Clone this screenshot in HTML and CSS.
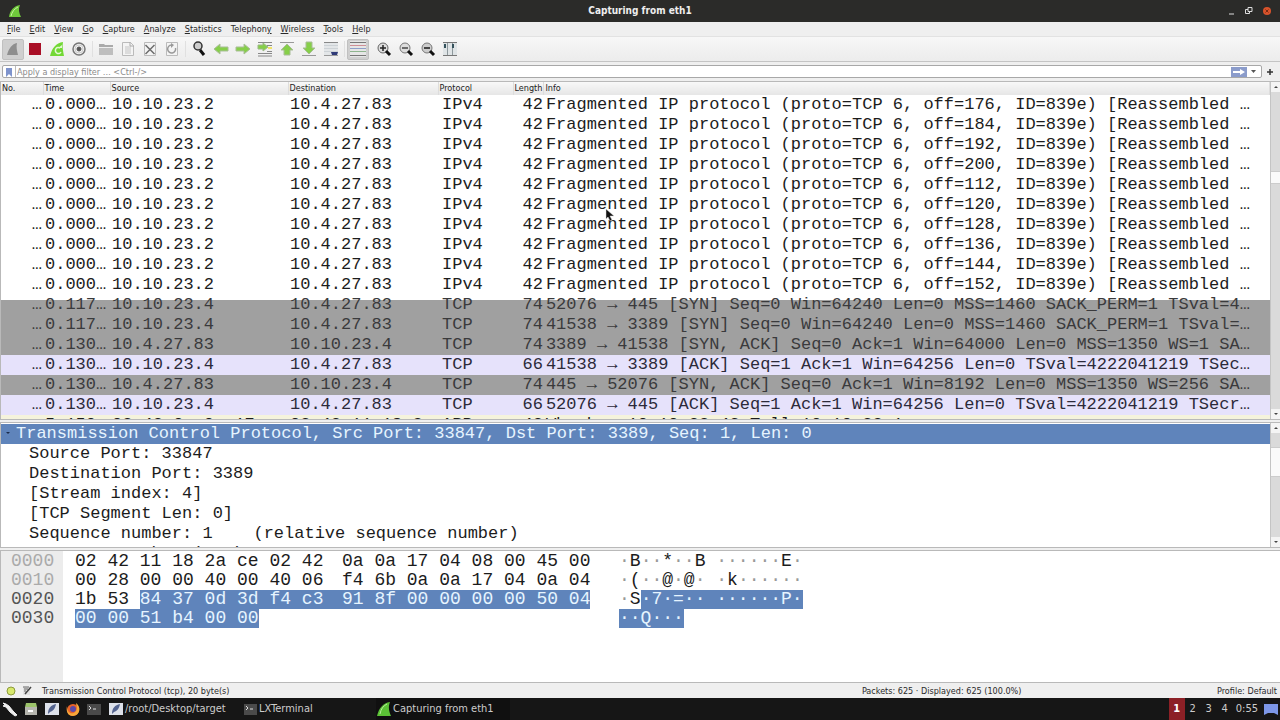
FILE: index.html
```html
<!DOCTYPE html>
<html lang="en">
<head>
    <meta charset="utf-8">
    <title>Capturing from eth1</title>
    <link rel="stylesheet" href="styles.css">
</head>
<body>
    <header class="titlebar">
        <svg class="app-icon" width="14" height="14" viewBox="0 0 14 14"><path d="M1 13C2 6 6 2 12 1c-2 4-1 8 1 12z" fill="#6fc93b"/><path d="M3 12c1-4 3-7 7-9" stroke="#c8f2a4" fill="none"/></svg>
        <h1>Capturing from eth1</h1>
        <div class="window-buttons">
            <button aria-label="Minimize"><svg width="8" height="8"><path d="M1 7h5" stroke="#ddd"/></svg></button>
            <button aria-label="Restore"><svg width="8" height="8" fill="none" stroke="#ddd"><path d="M3 .5h4v4H3zM3 2.500H.500v4h4V4.500"/></svg></button>
            <button aria-label="Close"><svg width="10" height="10"><circle cx="5" cy="5" r="4" fill="#d8532b"/><path d="M3.500 3.500l3 3m0-3l-3 3" stroke="#7a2a12"/></svg></button>
        </div>
    </header>

    <nav class="menubar">
        <a href="#"><u>F</u>ile</a>
        <a href="#"><u>E</u>dit</a>
        <a href="#"><u>V</u>iew</a>
        <a href="#"><u>G</u>o</a>
        <a href="#"><u>C</u>apture</a>
        <a href="#"><u>A</u>nalyze</a>
        <a href="#"><u>S</u>tatistics</a>
        <a href="#">Telephon<u>y</u></a>
        <a href="#"><u>W</u>ireless</a>
        <a href="#"><u>T</u>ools</a>
        <a href="#"><u>H</u>elp</a>
    </nav>

    <div class="toolbar">
        <button class="pressed" aria-label="Start capture"><svg viewBox="0 0 16 16"><path d="M2 14C4 7 7 3 12 2c-1 4 0 8 1 12z" fill="#8e8e8e"/></svg></button>
        <button aria-label="Stop capture"><svg viewBox="0 0 16 16"><path d="M2 2h12v12H2z" fill="#a90f26"/></svg></button>
        <button aria-label="Restart capture"><svg viewBox="0 0 16 16"><path d="M1 15C3 7 7 2 14 1c-1 4 0 9 1 14z" fill="#72d835"/><path d="M11 7a3 3 0 1 0 1 4" stroke="#e3f9d2" stroke-width="1.500" fill="none"/><path d="M9 7h4V4z" fill="#e3f9d2"/></svg></button>
        <button aria-label="Capture options"><svg viewBox="0 0 16 16" fill="none"><circle cx="8" cy="8" r="6" stroke="#777" stroke-width="1.500"/><circle cx="8" cy="8" r="2" fill="#555" stroke="#555"/><circle cx="8" cy="8" r="4" stroke="#ccc"/></svg></button>
        <span class="separator"></span>
        <button aria-label="Open"><svg viewBox="0 0 16 16"><path d="M1 3h5l1 1h8v10H1z" fill="#aaa"/><path d="M1 7h14v7H1z" fill="#bebebe"/><path d="M1 6.500h14" stroke="#eee"/></svg></button>
        <button aria-label="Save"><svg viewBox="0 0 16 16"><path d="M2.500 1.500h8l3 3v10h-11z" fill="#f4f4f4" stroke="#bbb"/><path d="M5 6h6M5 8h6M5 10h6M5 12h6" stroke="#c4c4c4"/><path d="M10 1v4h4" fill="none" stroke="#aaa"/></svg></button>
        <button aria-label="Close file"><svg viewBox="0 0 16 16"><path d="M2.500 1.500h11v13h-11z" fill="#f4f4f4" stroke="#bbb"/><path d="M3.500 4l9 9m0-9l-9 9" stroke="#6d6d6d" stroke-width="1.500"/></svg></button>
        <button aria-label="Reload"><svg viewBox="0 0 16 16"><path d="M2.500 1.500h11v13h-11z" fill="#f4f4f4" stroke="#bbb"/><path d="M11.500 7a4 4 0 1 1-4-3" stroke="#999" stroke-width="1.500" fill="none"/><path d="M7 2l3 2-3 3z" fill="#999"/></svg></button>
        <span class="separator"></span>
        <button aria-label="Find"><svg viewBox="0 0 16 16"><circle cx="7" cy="5" r="4" fill="#ccc" stroke="#333" stroke-width="1.500"/><path d="M9 9l4 5" stroke="#111" stroke-width="3"/></svg></button>
        <button aria-label="Previous packet"><svg viewBox="0 0 16 16"><path d="M1 8l6-5v3h8v4H7v3z" fill="#86cf49" stroke="#a9bd98"/></svg></button>
        <button aria-label="Next packet"><svg viewBox="0 0 16 16"><path d="M15 8L9 3v3H1v4h8v3z" fill="#86cf49" stroke="#a9bd98"/></svg></button>
        <button aria-label="Go to packet"><svg viewBox="0 0 16 16"><path d="M1 1.500h14M10 4.500h5M10 10.500h5M1 12.500h14M1 15h14" stroke="#888"/><path d="M11 6h4v2h-4z" fill="#f0e36a"/><path d="M11 6L6 2v2H1v4h5v2z" fill="#86cf49" stroke="#9bb886"/></svg></button>
        <button aria-label="First packet"><svg viewBox="0 0 16 16"><path d="M1 1.500h14" stroke="#999"/><path d="M8 3l6 6h-3v5H5V9H2z" fill="#86cf49" stroke="#a9bd98"/></svg></button>
        <button aria-label="Last packet"><svg viewBox="0 0 16 16"><path d="M1 14.500h14" stroke="#999"/><path d="M8 13l6-6h-3V1H5v6H2z" fill="#86cf49" stroke="#a9bd98"/></svg></button>
        <button aria-label="Auto scroll"><svg viewBox="0 0 16 16"><path d="M1 1h14v14H1z" fill="#e3e6e8"/><path d="M1 1.500h14" stroke="#888"/><path d="M1 4.500h14M1 7.500h14M1 10.500h14" stroke="#cdd2d6"/><path d="M1 14.500h14" stroke="#999"/><path d="M8 11h7l-1 3H9z" fill="#2f3a78"/></svg></button>
        <span class="separator"></span>
        <button class="pressed" aria-label="Colorize"><svg viewBox="0 0 16 16"><path d="M0 0h16v16H0z" fill="#e6e6e6"/><path d="M0 1.500h16M0 14.500h16" stroke="#777"/><path d="M0 4.500h16" stroke="#cf8f96"/><path d="M0 7.500h16" stroke="#8f9fc8"/><path d="M0 10.500h16" stroke="#8fb58f"/></svg></button>
        <button class="spaced" aria-label="Zoom in"><svg viewBox="0 0 16 16"><circle cx="7" cy="7" r="5" fill="#ddd" stroke="#666"/><path d="M10 10l4 4" stroke="#111" stroke-width="3"/><path d="M4 7h6M7 4v6" stroke="#222" stroke-width="1.500"/></svg></button>
        <button aria-label="Zoom out"><svg viewBox="0 0 16 16"><circle cx="7" cy="7" r="5" fill="#ddd" stroke="#777"/><path d="M10 10l4 4" stroke="#111" stroke-width="3"/><path d="M4 7h6" stroke="#444" stroke-width="1.500"/></svg></button>
        <button aria-label="Normal size"><svg viewBox="0 0 16 16"><circle cx="7" cy="7" r="5" fill="#ccc" stroke="#777"/><path d="M10 10l4 4" stroke="#111" stroke-width="3"/><path d="M4 7h6" stroke="#444" stroke-width="2"/></svg></button>
        <button aria-label="Resize columns"><svg viewBox="0 0 16 16"><path d="M1 2h14v12H1z" fill="#dfe4e6"/><path d="M1 1.500h14M1 14.500h14" stroke="#777"/><path d="M5.500 2v12M10.500 2v12" stroke="#8d989c"/><path d="M2 3h2v4H2zM10 3h2v4h-2z" fill="#35525c"/></svg></button>
    </div>

    <form class="filterbar">
        <div class="filter-box">
            <svg width="12" height="12" viewBox="0 0 12 12"><path d="M3 2h6v9L6 8l-3 3z" fill="#7e93cc"/></svg>
            <input type="text" aria-label="Display filter" placeholder="Apply a display filter … &lt;Ctrl-/&gt;">
            <button type="button" aria-label="Apply filter"><svg width="16" height="10"><path d="M0 0h16v10H0z" fill="#8b9ccb"/><path d="M2 4h7V2l5 3-5 3V6H2z" fill="#fff"/></svg></button>
            <button type="button" class="drop" aria-label="Recent filters"><svg width="6" height="4"><path d="M0 0h5L2.500 3z" fill="#555"/></svg></button>
        </div>
        <button type="button" class="add" aria-label="Add filter button"><svg width="8" height="8"><path d="M4 1v6M1 4h6" stroke="#333" stroke-width="1.500"/></svg></button>
    </form>

    <main class="panes">
        <section class="pane packets">
            <table class="packet-table">
                <colgroup><col class="c-no"><col class="c-time"><col class="c-source"><col class="c-dest"><col class="c-proto"><col class="c-len"><col></colgroup>
                <thead>
                    <tr><th>No.</th><th>Time</th><th>Source</th><th>Destination</th><th>Protocol</th><th>Length</th><th>Info</th></tr>
                </thead>
                <tbody>
                    <tr><td>…</td><td>0.000…</td><td>10.10.23.2</td><td>10.4.27.83</td><td>IPv4</td><td>42</td><td>Fragmented IP protocol (proto=TCP 6, off=176, ID=839e) [Reassembled …</td></tr>
                    <tr><td>…</td><td>0.000…</td><td>10.10.23.2</td><td>10.4.27.83</td><td>IPv4</td><td>42</td><td>Fragmented IP protocol (proto=TCP 6, off=184, ID=839e) [Reassembled …</td></tr>
                    <tr><td>…</td><td>0.000…</td><td>10.10.23.2</td><td>10.4.27.83</td><td>IPv4</td><td>42</td><td>Fragmented IP protocol (proto=TCP 6, off=192, ID=839e) [Reassembled …</td></tr>
                    <tr><td>…</td><td>0.000…</td><td>10.10.23.2</td><td>10.4.27.83</td><td>IPv4</td><td>42</td><td>Fragmented IP protocol (proto=TCP 6, off=200, ID=839e) [Reassembled …</td></tr>
                    <tr><td>…</td><td>0.000…</td><td>10.10.23.2</td><td>10.4.27.83</td><td>IPv4</td><td>42</td><td>Fragmented IP protocol (proto=TCP 6, off=112, ID=839e) [Reassembled …</td></tr>
                    <tr><td>…</td><td>0.000…</td><td>10.10.23.2</td><td>10.4.27.83</td><td>IPv4</td><td>42</td><td>Fragmented IP protocol (proto=TCP 6, off=120, ID=839e) [Reassembled …</td></tr>
                    <tr><td>…</td><td>0.000…</td><td>10.10.23.2</td><td>10.4.27.83</td><td>IPv4</td><td>42</td><td>Fragmented IP protocol (proto=TCP 6, off=128, ID=839e) [Reassembled …</td></tr>
                    <tr><td>…</td><td>0.000…</td><td>10.10.23.2</td><td>10.4.27.83</td><td>IPv4</td><td>42</td><td>Fragmented IP protocol (proto=TCP 6, off=136, ID=839e) [Reassembled …</td></tr>
                    <tr><td>…</td><td>0.000…</td><td>10.10.23.2</td><td>10.4.27.83</td><td>IPv4</td><td>42</td><td>Fragmented IP protocol (proto=TCP 6, off=144, ID=839e) [Reassembled …</td></tr>
                    <tr><td>…</td><td>0.000…</td><td>10.10.23.2</td><td>10.4.27.83</td><td>IPv4</td><td>42</td><td>Fragmented IP protocol (proto=TCP 6, off=152, ID=839e) [Reassembled …</td></tr>
                    <tr class="syn partial"><td>…</td><td>0.117…</td><td>10.10.23.4</td><td>10.4.27.83</td><td>TCP</td><td>74</td><td>52076 → 445 [SYN] Seq=0 Win=64240 Len=0 MSS=1460 SACK_PERM=1 TSval=4…</td></tr>
                    <tr class="syn"><td>…</td><td>0.117…</td><td>10.10.23.4</td><td>10.4.27.83</td><td>TCP</td><td>74</td><td>41538 → 3389 [SYN] Seq=0 Win=64240 Len=0 MSS=1460 SACK_PERM=1 TSval=…</td></tr>
                    <tr class="syn"><td>…</td><td>0.130…</td><td>10.4.27.83</td><td>10.10.23.4</td><td>TCP</td><td>74</td><td>3389 → 41538 [SYN, ACK] Seq=0 Ack=1 Win=64000 Len=0 MSS=1350 WS=1 SA…</td></tr>
                    <tr class="tcp"><td>…</td><td>0.130…</td><td>10.10.23.4</td><td>10.4.27.83</td><td>TCP</td><td>66</td><td>41538 → 3389 [ACK] Seq=1 Ack=1 Win=64256 Len=0 TSval=4222041219 TSec…</td></tr>
                    <tr class="syn"><td>…</td><td>0.130…</td><td>10.4.27.83</td><td>10.10.23.4</td><td>TCP</td><td>74</td><td>445 → 52076 [SYN, ACK] Seq=0 Ack=1 Win=8192 Len=0 MSS=1350 WS=256 SA…</td></tr>
                    <tr class="tcp"><td>…</td><td>0.130…</td><td>10.10.23.4</td><td>10.4.27.83</td><td>TCP</td><td>66</td><td>52076 → 445 [ACK] Seq=1 Ack=1 Win=64256 Len=0 TSval=4222041219 TSecr…</td></tr>
                    <tr class="arp"><td>…</td><td>5.150…</td><td>02:42:0a:0a:17…</td><td>02:42:11:18:2…</td><td>ARP</td><td>42</td><td>Who has 10.10.23.4? Tell 10.10.23.1</td></tr>
                </tbody>
            </table>
            <div class="scrollbar">
                <button aria-label="Scroll up"><svg width="6" height="4"><path d="M1 3h4L3 1z"/></svg></button>
                <span class="track before"></span><span class="thumb"></span><span class="track after"></span>
                <button aria-label="Scroll down"><svg width="6" height="4"><path d="M1 1h4L3 3z"/></svg></button>
            </div>
            <svg class="cursor" width="10" height="14" viewBox="0 0 10 14"><path d="M1 1v10l2-2 2 4 2-1-2-4h4z" fill="#111" stroke="#ddd" stroke-width=".5"/></svg>
        </section>

        <section class="pane details">
            <ul class="tree">
                <li class="selected"><span class="arrow"></span>Transmission Control Protocol, Src Port: 33847, Dst Port: 3389, Seq: 1, Len: 0</li>
                <li>Source Port: 33847</li>
                <li>Destination Port: 3389</li>
                <li>[Stream index: 4]</li>
                <li>[TCP Segment Len: 0]</li>
                <li>Sequence number: 1&nbsp;&nbsp;&nbsp; (relative sequence number)</li>
                <li>Sequence number (raw): 4106457487</li>
            </ul>
            <div class="scrollbar">
                <button aria-label="Scroll up"><svg width="6" height="4"><path d="M1 3h4L3 1z"/></svg></button>
                <span class="track before"></span><span class="thumb"></span><span class="track after"></span>
                <button aria-label="Scroll down"><svg width="6" height="4"><path d="M1 1h4L3 3z"/></svg></button>
            </div>
        </section>

        <section class="pane bytes">
            <div class="offsets">
                <div class="dim">0000</div>
                <div class="dim">0010</div>
                <div>0020</div>
                <div>0030</div>
            </div>
            <div class="hex">
                <div class="line"><span class="half">02 42 11 18 2a ce 02 42</span><span>0a 0a 17 04 08 00 45 00</span></div>
                <div class="line"><span class="half">00 28 00 00 40 00 40 06</span><span>f4 6b 0a 0a 17 04 0a 04</span></div>
                <div class="line"><span class="half">1b 53 <mark>84 37 0d 3d f4 c3</mark></span><mark>91 8f 00 00 00 00 50 04</mark></div>
                <div class="line"><mark>00 00 51 b4 00 00</mark></div>
            </div>
            <div class="ascii">
                <div class="line"><i>·</i>B<i>··</i>*<i>··</i>B <i>······</i>E<i>·</i></div>
                <div class="line"><i>·</i>(<i>··</i>@<i>·</i>@<i>· ·</i>k<i>······</i></div>
                <div class="line"><i>·</i>S<mark>·7·=·· ······P·</mark></div>
                <div class="line"><mark>··Q···</mark></div>
            </div>
        </section>
    </main>

    <footer class="statusbar">
        <svg width="12" height="12"><circle cx="6" cy="6" r="4" fill="#d7e86c" stroke="#8d9a3c"/></svg>
        <svg width="12" height="12"><path d="M2 2h7v8H2z" fill="#e2e2e2"/><path d="M2 2h6M3 4h4M3 6h2" stroke="#666"/><path d="M4 9l6-7" stroke="#444" stroke-width="1.500"/></svg>
        <span class="status-field">Transmission Control Protocol (tcp), 20 byte(s)</span>
        <span class="status-packets">Packets: 625 · Displayed: 625 (100.0%)</span>
        <span class="status-profile">Profile: Default</span>
    </footer>

    <div class="taskbar">
        <div class="launchers">
            <button aria-label="Menu"><svg viewBox="0 0 16 16"><path d="M1 2l3 1 3 2 4 5 4 4-2 1-5-4-4-5-3-1 2-1z" fill="#eee" stroke="#eee"/></svg></button>
            <button aria-label="File manager"><svg viewBox="0 0 16 16"><path d="M3 2h10l1 4H2z" fill="#9cc36a"/><path d="M2 6h12v8H2z" fill="#b5b5ae"/><path d="M5 10h5" stroke="#fff" stroke-width="2"/></svg></button>
            <button aria-label="Editor"><svg viewBox="0 0 16 16"><path d="M1 2h14v12H1z" fill="#dde1ea"/><path d="M4 13c0-6 3-9 8-10-1 5-3 7-6 8z" fill="#53638f"/></svg></button>
            <button aria-label="Browser"><svg viewBox="0 0 16 16"><circle cx="8" cy="9" r="6" fill="#e8622a"/><circle cx="8" cy="8" r="3" fill="#5a48a8"/><path d="M2 5c0 8 6 9 9 5 2-3 0-6 0-8 5 3 5 12-3 13C2 15 1 9 2 5z" fill="#f6a83a"/></svg></button>
            <button aria-label="Terminal"><svg viewBox="0 0 16 16"><path d="M1 3h14v11H1z" fill="#4a4a4a"/><path d="M3 5l2 2-2 2M7 8h3" stroke="#ddd" fill="none"/></svg></button>
        </div>
        <button class="task"><svg viewBox="0 0 16 16"><path d="M1 2h14v12H1z" fill="#dde1ea"/><path d="M4 13c0-6 3-9 8-10-1 5-3 7-6 8z" fill="#53638f"/></svg>/root/Desktop/target</button>
        <button class="task"><svg viewBox="0 0 16 16"><path d="M2 3h13v11H2z" fill="#4a4a4a"/><path d="M4 5l2 2-2 2M8 8h3" stroke="#ddd" fill="none"/></svg>LXTerminal</button>
        <button class="task active"><svg viewBox="0 0 16 16"><path d="M1 15C3 7 7 2 14 1c-2 5-1 9 1 14z" fill="#5bc236"/><path d="M4 13c1-5 3-8 7-10" stroke="#b9ef9c" fill="none"/></svg>Capturing from eth1</button>
        <div class="tray">
            <button class="current">1</button><button>2</button><button>3</button><button>4</button>
            <time>0:55</time>
            <svg width="14" height="12"><path d="M0 1h14v11l-4-2H4l-4 2z" fill="#7d97e8"/></svg>
        </div>
    </div>
</body>
</html>
```
FILE: styles.css
```css
* {
    box-sizing: border-box;
}
body {
    margin: 0;
    height: 100vh;
    display: flex;
    flex-direction: column;
    overflow: hidden;
    background: #efefef;
    color: #2a2a2a;
    font: 9px/12px "DejaVu Sans Condensed", "DejaVu Sans", sans-serif;
}
button {
    display: flex;
    align-items: center;
    justify-content: center;
    margin: 0;
    padding: 0;
    border: 0;
    background: none;
    color: inherit;
    font: inherit;
}
svg {
    display: block;
    flex: none;
}

/* title and menus */
.titlebar {
    flex: none;
    display: grid;
    grid-template-columns: 1fr auto 1fr;
    align-items: center;
    height: 22px;
    padding: 0 8px;
    background: #2b2b29;
    color: #eee;
}
.titlebar h1 {
    margin: 0;
    font-size: 10px;
    line-height: 20px;
}
.window-buttons {
    display: flex;
    justify-content: flex-end;
    gap: 9px;
}
.menubar {
    flex: none;
    display: flex;
    gap: 9px;
    height: 14px;
    padding: 1px 7px;
}
.menubar a {
    color: #2a2a2a;
    text-decoration: none;
}
.toolbar {
    flex: none;
    display: flex;
    align-items: center;
    height: 26px;
    padding: 0 2px;
    border-top: 1px solid #e2e2e2;
    border-bottom: 1px solid #c4c4c4;
    background: linear-gradient(#f7f7f7, #ececec);
}
.toolbar button {
    width: 22px;
    height: 21px;
}
.toolbar svg {
    width: 16px;
    height: 16px;
}
.toolbar .pressed {
    background: #cfcfcf;
    border: 1px solid #c0c0c0;
    border-radius: 2px;
}
.toolbar .spaced {
    margin-left: 4px;
}
.separator {
    width: 1px;
    height: 16px;
    margin: 0 2px;
    background: #e0e0e0;
}

/* display filter */
.filterbar {
    flex: none;
    display: flex;
    align-items: center;
    height: 19px;
    padding: 0 6px 0 2px;
}
.filter-box {
    flex: 1;
    display: flex;
    align-items: center;
    height: 13px;
    padding-right: 4px;
    border: 1px solid #a8a8a8;
    border-radius: 2px;
    background: #fff;
}
.filter-box input {
    flex: 1;
    min-width: 0;
    height: 11px;
    padding: 0 1px;
    border: 0;
    border-left: 1px solid #bbb;
    outline: 0;
    background: none;
    font: inherit;
}
.filter-box input::placeholder {
    color: #8b8b8b;
}
.filter-box .drop {
    margin-left: 4px;
}
.add {
    margin-left: 4px;
}

/* three stacked panes */
.panes {
    flex: 1;
    min-height: 0;
    display: grid;
    grid-template-rows: 339fr 126fr 133fr;
    row-gap: 2px;
}
.pane {
    position: relative;
    display: flex;
    min-height: 0;
    overflow: hidden;
    border: 1px solid #b9b9b9;
    border-right: 0;
    background: #fff;
    color: #1c1c1c;
    font: 17px/20px "Liberation Mono", monospace;
}
.packet-table {
    flex: 1;
    min-width: 0;
    height: 0;
    table-layout: fixed;
    border-collapse: collapse;
}
.c-no { width: 42px; }
.c-time { width: 67px; }
.c-source { width: 178px; }
.c-dest { width: 150px; }
.c-proto { width: 75px; }
.c-len { width: 30px; }
.packet-table th {
    height: 13px;
    padding: 0 1px;
    overflow: hidden;
    border-right: 1px solid #ddd;
    background: linear-gradient(#f8f8f8, #e6e6e6);
    font: 9px/13px "DejaVu Sans Condensed", "DejaVu Sans", sans-serif;
    text-align: left;
    white-space: nowrap;
}
.packet-table td {
    height: 20px;
    padding: 0 2px;
    overflow: hidden;
    white-space: pre;
}
.packet-table td:nth-child(5) {
    padding-left: 4px;
}
.packet-table td:first-child,
.packet-table td:nth-child(6) {
    padding: 0 1px;
    text-align: right;
}
.syn {
    background: #a0a0a0;
    color: #3a3a3c;
}
.partial {
    background: linear-gradient(#fff 5px, #a0a0a0 5px);
}
.tcp {
    background: #e6e2fb;
    color: #2c2a3a;
}
.arp {
    background: #f5f3dc;
}
.cursor {
    position: absolute;
    left: 604px;
    top: 126px;
}

.scrollbar {
    flex: none;
    display: flex;
    flex-direction: column;
    width: 10px;
    border-left: 1px solid #c4c4c4;
}
.scrollbar button {
    height: 10px;
    background: #f4f4f4;
    fill: #444;
}
.track {
    background: #dadada;
}
.thumb {
    border: 1px solid #ccc;
    border-width: 1px 0;
    background: #fafafa;
}
.packets .before { flex: 80; }
.packets .thumb { flex: 11; }
.packets .after { flex: 228; }
.details .before { flex: 14; }
.details .thumb { flex: 29; }
.details .after { flex: 62; }

.tree {
    flex: 1;
    margin: 0;
    padding: 1px 0 0;
    list-style: none;
}
.tree li {
    padding-left: 28px;
    white-space: pre;
}
.tree .selected {
    display: flex;
    align-items: center;
    padding-left: 5px;
    background: #5f84bb;
    color: #e6f4ff;
}
.arrow {
    width: 4px;
    margin-right: 6px;
    border: 2px solid transparent;
    border-top-color: #1c2c4c;
}

.bytes {
    font-size: 18px;
    line-height: 19px;
}
.offsets,
.hex,
.ascii {
    padding-top: 1px;
}
.offsets {
    width: 62px;
    padding-left: 10px;
    background: #ececec;
    color: #555;
}
.dim {
    color: #aaa;
}
.hex {
    width: 532px;
    margin-left: 12px;
}
.ascii {
    margin-left: 12px;
}
.line {
    display: flex;
    height: 19px;
    white-space: pre;
}
.half {
    display: flex;
    width: 267px;
}
.half mark {
    flex: 1;
}
.ascii i {
    color: #999;
    font-style: normal;
}
mark {
    background: #5f84bb;
    color: #e6f4ff;
}

.statusbar {
    flex: none;
    display: flex;
    align-items: center;
    height: 15px;
    padding: 0 3px 0 5px;
    gap: 4px;
}
.status-field {
    flex: 818;
    padding-left: 5px;
}
.status-packets {
    flex: 352;
}

.taskbar {
    flex: none;
    display: flex;
    height: 22px;
    background: #161616;
    color: #ccc;
    font-size: 11px;
    line-height: 14px;
}
.taskbar button svg {
    width: 16px;
    height: 16px;
}
.launchers {
    display: flex;
    gap: 5px;
    padding: 0 6px 0 2px;
}
.task {
    justify-content: flex-start;
    gap: 1px;
    width: 134px;
}
.task.active {
    background: #101010;
}
.tray {
    display: flex;
    align-items: center;
    margin-left: auto;
    padding-right: 2px;
}
.tray button {
    width: 16px;
    height: 22px;
}
.tray .current {
    background: #8c2026;
    color: #fff;
    font-weight: bold;
}
.tray time {
    margin: 0 6px 0 3px;
}
```
